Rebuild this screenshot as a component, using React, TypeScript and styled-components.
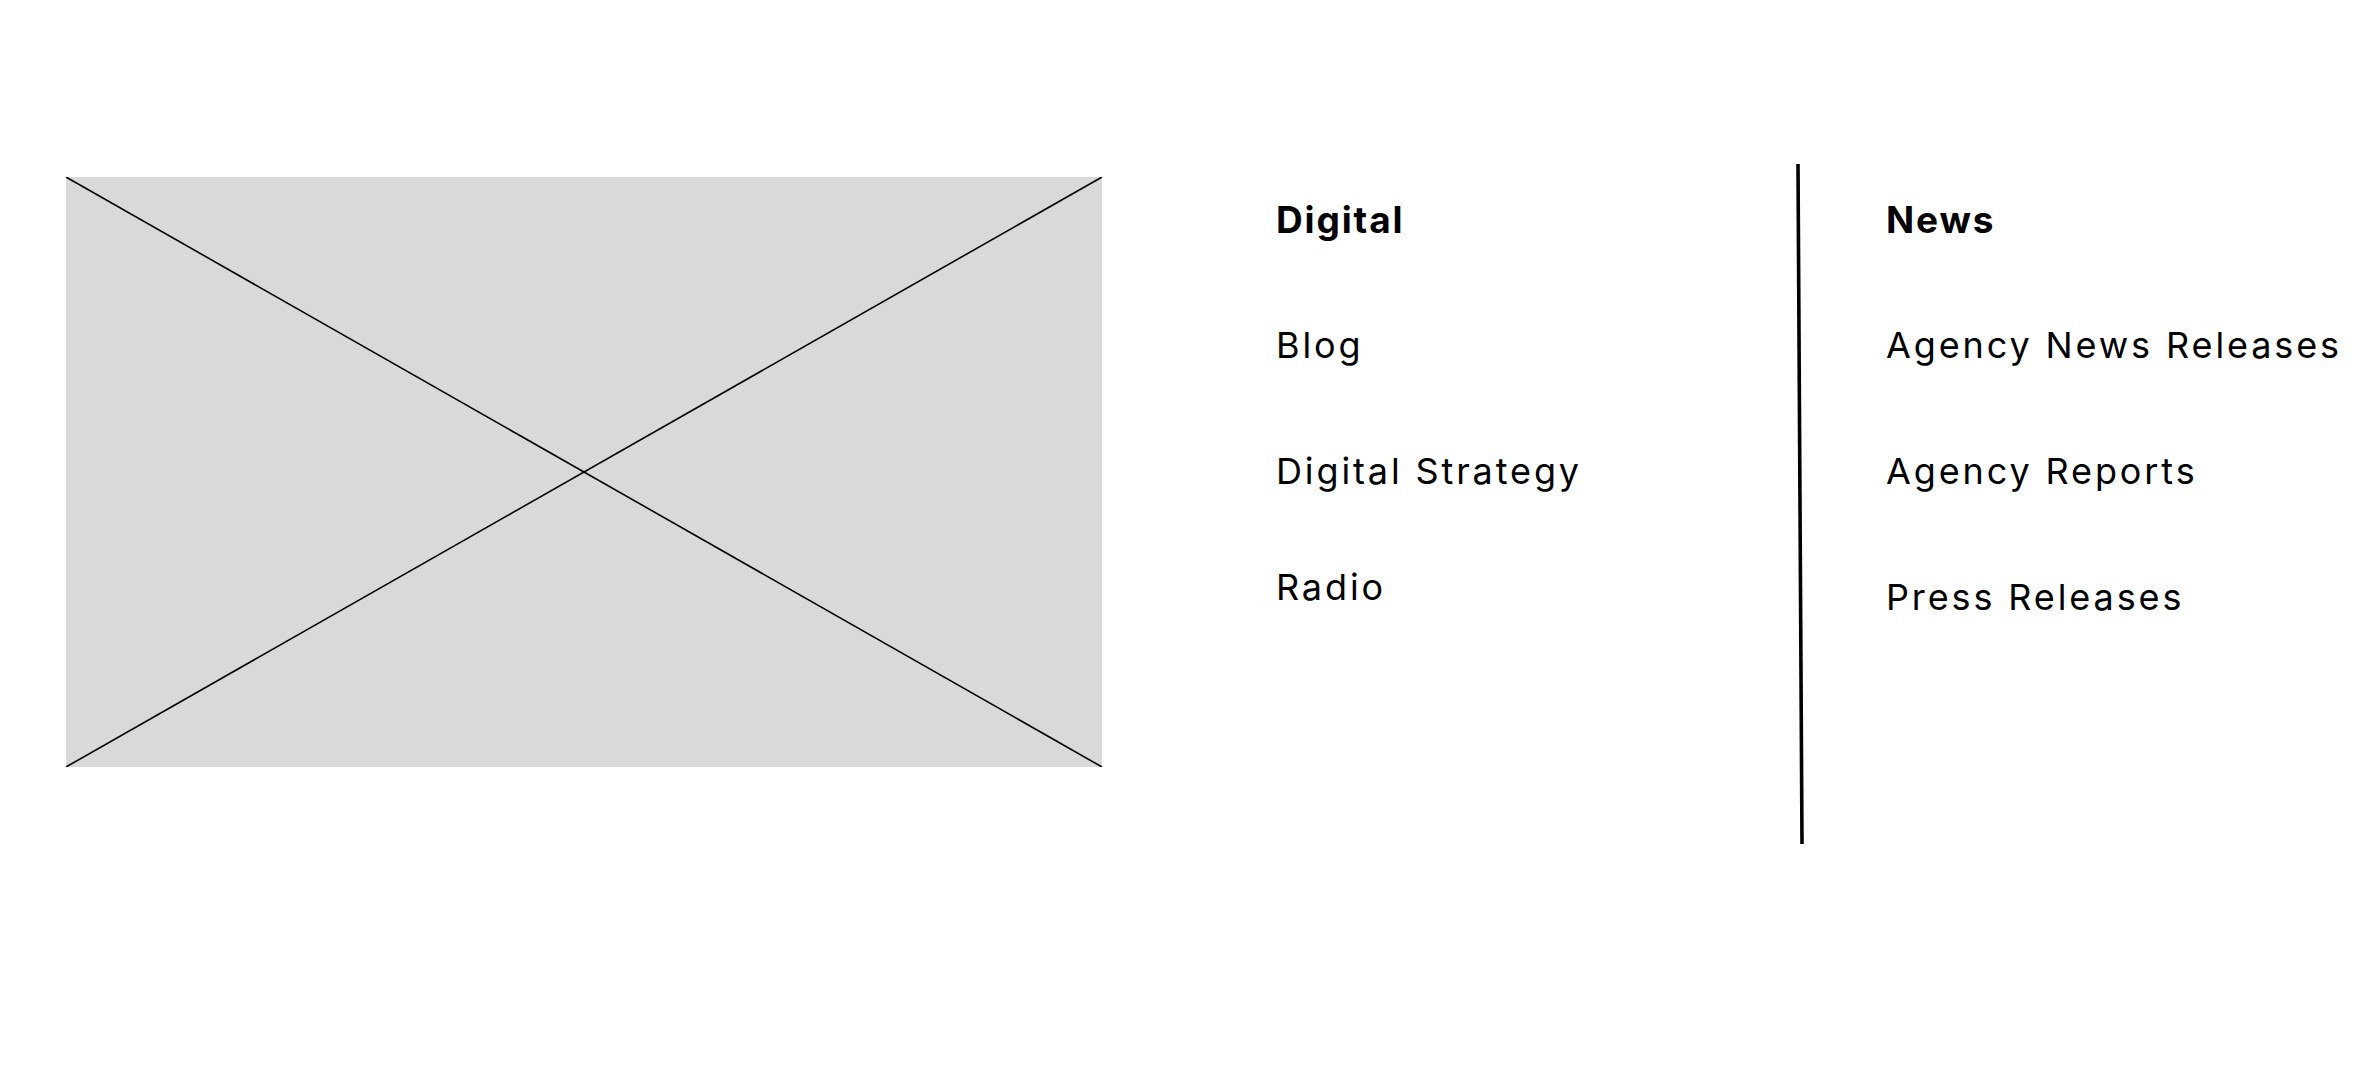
import React from 'react'
import styled, { createGlobalStyle } from 'styled-components'

const GlobalStyle = createGlobalStyle`
  html, body {
    margin: 0;
    padding: 0;
    background: #ffffff;
  }
  body {
    font-family: 'Inter', 'Noto Sans', sans-serif;
    color: #000000;
  }
`

const Page = styled.main`
  display: flex;
  align-items: flex-start;
  width: 2360px;
  height: 1090px;
  padding: 164px 0 0 66px;
  box-sizing: border-box;
`

const Placeholder = styled.div`
  flex: none;
  width: 1036px;
  height: 590px;
  margin-top: 13px;
  background: #d9d9d9;

  svg {
    display: block;
    width: 100%;
    height: 100%;
  }
`

const Menu = styled.nav`
  display: flex;
  flex-direction: column;
  flex: none;
  width: ${props => props.width}px;
  margin-left: ${props => props.offset}px;
`

const Item = styled.a`
  display: block;
  margin-top: ${props => props.top}px;
  font-size: ${props => (props.heading ? 37 : 36)}px;
  line-height: 44px;
  letter-spacing: ${props => (props.heading ? '0.05em' : '0.08em')};
  font-weight: ${props => (props.heading ? 700 : 400)};
  color: #000000;
  text-decoration: none;
  white-space: nowrap;
  cursor: pointer;
`

const Divider = styled.svg`
  display: block;
  flex: none;
  width: 8px;
  height: 680px;
`

const digital = [
  { label: 'Digital', top: 34, heading: true },
  { label: 'Blog', top: 81 },
  { label: 'Digital Strategy', top: 82 },
  { label: 'Radio', top: 72 },
]

const news = [
  { label: 'News', top: 34, heading: true },
  { label: 'Agency News Releases', top: 81 },
  { label: 'Agency Reports', top: 82 },
  { label: 'Press Releases', top: 82 },
]

export default function App() {
  return (
    <>
      <GlobalStyle />
      <Page>
        <Placeholder>
          <svg viewBox="0 0 1036 590" preserveAspectRatio="none">
            <line x1="0" y1="0" x2="1036" y2="590" stroke="#000" strokeWidth="1.6" />
            <line x1="0" y1="590" x2="1036" y2="0" stroke="#000" strokeWidth="1.6" />
          </svg>
        </Placeholder>

        <Menu offset={174} width={520}>
          {digital.map(item => (
            <Item key={item.label} top={item.top} heading={item.heading}>
              {item.label}
            </Item>
          ))}
        </Menu>

        <Divider viewBox="0 0 8 680">
          <line x1="2" y1="0" x2="6" y2="680" stroke="#000" strokeWidth="3.6" />
        </Divider>

        <Menu offset={82} width={470}>
          {news.map(item => (
            <Item key={item.label} top={item.top} heading={item.heading}>
              {item.label}
            </Item>
          ))}
        </Menu>
      </Page>
    </>
  )
}
